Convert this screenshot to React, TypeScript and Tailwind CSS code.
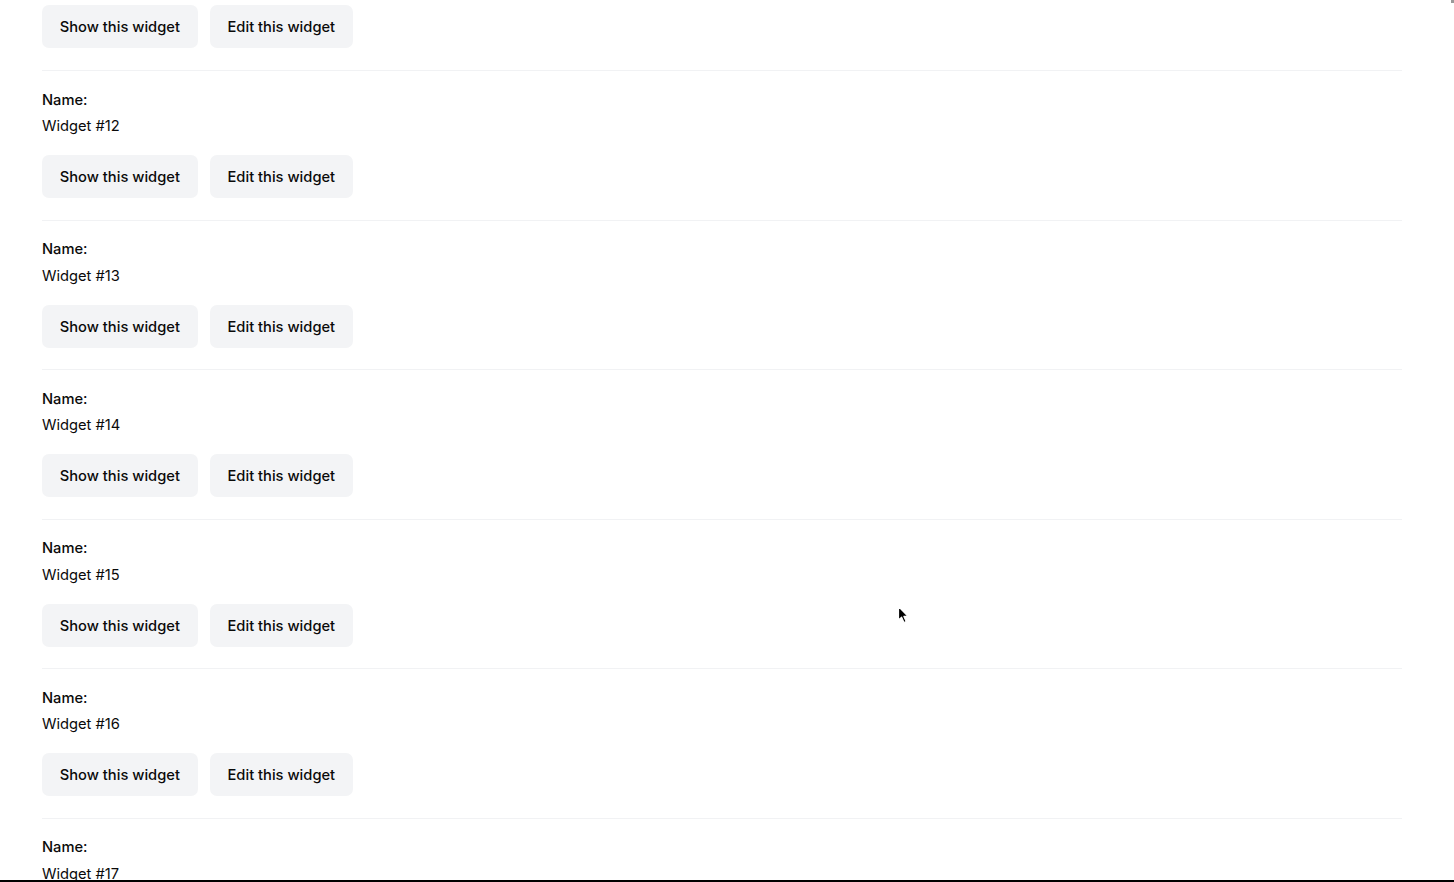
import { FC } from "react";

const font = { fontFamily: "Inter, 'Noto Sans', sans-serif" };

const Buttons: FC = () => (
  <div className="flex gap-[12px]">
    <a className="inline-flex h-[42.7px] items-center rounded-[7px] bg-[#f3f4f6] px-[17.8px] pt-[0.5px] text-[14.7px] font-medium text-[#0a0a0a]">
      Show this widget
    </a>
    <a className="inline-flex h-[42.7px] items-center rounded-[7px] bg-[#f3f4f6] px-[17.8px] pt-[0.5px] text-[14.7px] font-medium text-[#0a0a0a]">
      Edit this widget
    </a>
  </div>
);

const WidgetRow: FC<{ n: number }> = ({ n }) => (
  <div>
    <hr className="border-0 border-t border-[#f1f2f4]" />
    <div className="pt-[18.8px] text-[14.7px] leading-[21.4px] text-[#0a0a0a]">
      <strong className="mb-[5px] block font-medium">Name:</strong>
      <div>Widget #{n}</div>
    </div>
    <div className="pt-[17.7px] pb-[21.5px]">
      <Buttons />
    </div>
  </div>
);

export default function App() {
  const rows = [12, 13, 14, 15, 16, 17];
  return (
    <div className="relative h-[882px] overflow-hidden bg-white" style={font}>
      <div className="ml-[42px] w-[1360px]">
        <div className="pt-[5px] pb-[22.5px]">
          <Buttons />
        </div>
        {rows.map((n) => (
          <WidgetRow key={n} n={n} />
        ))}
      </div>

      {/* mouse pointer */}
      <svg
        className="absolute left-[897px] top-[605px]"
        width="14"
        height="20"
        viewBox="0 0 14 20"
      >
        <path
          d="M1.5 1.5 L1.5 15 L4.6 12.2 L7 17.5 L9.2 16.5 L6.9 11.4 L11 11.4 Z"
          fill="#000"
          stroke="#fff"
          strokeWidth="1.2"
          strokeLinejoin="round"
        />
      </svg>

      <div className="absolute right-0 top-0 h-[3px] w-[3px] bg-[#999]" />
      <div className="absolute bottom-0 left-0 h-[2px] w-full bg-black" />
    </div>
  );
}
